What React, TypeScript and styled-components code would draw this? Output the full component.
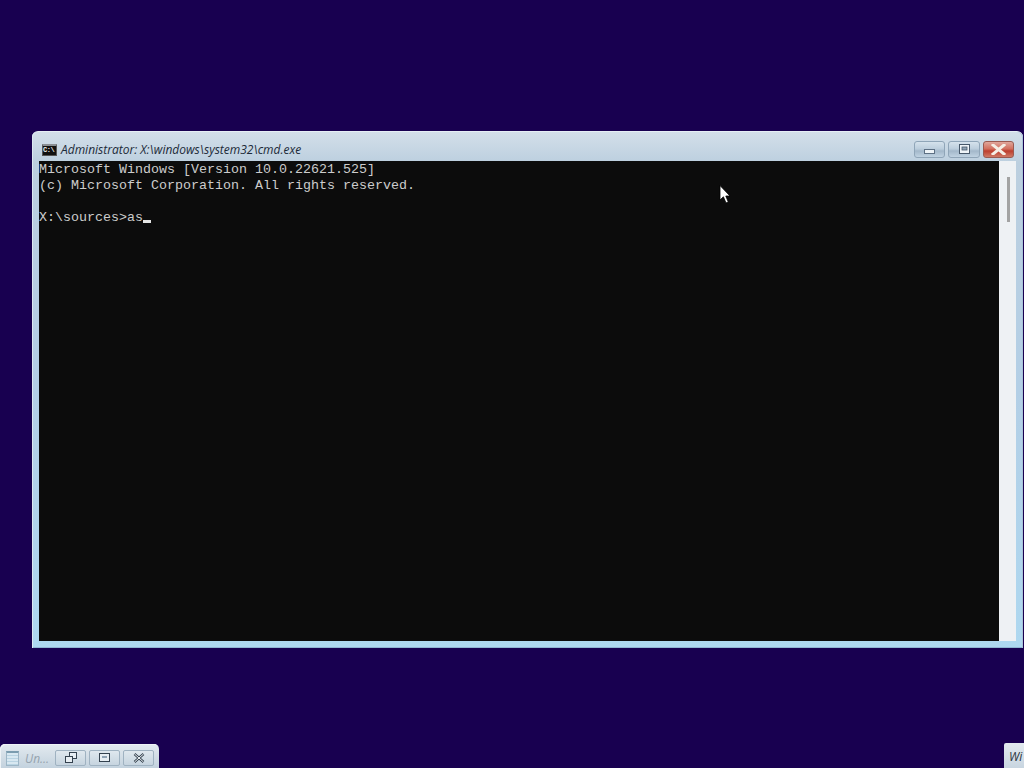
import React from 'react'
import styled, { createGlobalStyle } from 'styled-components'

const GlobalStyle = createGlobalStyle`
  html, body {
    margin: 0;
    padding: 0;
    height: 100%;
    overflow: hidden;
    background: #180050;
  }
`

const Desktop = styled.div`
  position: relative;
  width: 1024px;
  height: 768px;
  overflow: hidden;
  background: #180050;
`

const ConsoleWindow = styled.div`
  position: absolute;
  left: 32px;
  top: 131px;
  width: 991px;
  height: 517px;
  box-sizing: border-box;
  display: flex;
  flex-direction: column;
  padding: 0 7px 7px 7px;
  border-radius: 6px 6px 0 0;
  border-top: 1px solid #e6eef5;
  background: linear-gradient(180deg, #d3dfe9 0%, #bccfdf 6%, #b3cfe6 50%, #aed8f0 100%);
  box-shadow: inset 1px 0 0 #dce9f2, inset -1px 0 0 #a9c4d8, inset 0 -1px 0 #8fb6d2;
`

const TitleBar = styled.div`
  height: 29px;
  flex: none;
  box-sizing: border-box;
  display: flex;
  align-items: center;
  gap: 4px;
  padding: 6px 0 0 3px;
`

const ConsoleIcon = styled.div`
  width: 15px;
  height: 12px;
  flex: none;
  box-sizing: border-box;
  background: #111;
  border: 1px solid #555;
  border-top: 2px solid #8a8f94;
  color: #f2f2f2;
  font: bold 7px/8px "Liberation Mono", monospace;
  letter-spacing: -0.5px;
  overflow: hidden;
  white-space: nowrap;
`

const TitleText = styled.span`
  flex: 1;
  font: italic 12px/16px "Open Sans", sans-serif;
  color: #1c2a38;
  white-space: nowrap;
`

const CaptionGroup = styled.div`
  display: flex;
  gap: 3px;
  margin-top: -1px;
  margin-right: 2px;
`

const CaptionButton = styled.div<{ $close?: boolean; $w: number }>`
  width: ${p => p.$w}px;
  height: 17px;
  box-sizing: border-box;
  display: flex;
  align-items: center;
  justify-content: center;
  border: 1px solid ${p => (p.$close ? '#9a5a50' : '#8fa5b8')};
  border-radius: 3px;
  background: ${p =>
    p.$close
      ? 'linear-gradient(180deg, #e0a79c 0%, #d2705f 45%, #bd3f2e 60%, #cf7a66 100%)'
      : 'linear-gradient(180deg, #d5e2ec 0%, #bccedd 45%, #a3b8ca 60%, #c0d3e2 100%)'};
`

const MinimizeGlyph = styled.svg`
  margin-top: 5px;
`

const Body = styled.div`
  flex: 1;
  display: flex;
  min-height: 0;
`

const Screen = styled.pre`
  flex: 1;
  margin: 0;
  padding-top: 1px;
  background: #0c0c0c;
  color: #cccccc;
  font: 13.33px/16px "Liberation Mono", monospace;
  white-space: pre;
  overflow: hidden;
`

const Cursor = styled.span`
  display: inline-block;
  width: 8px;
  height: 3px;
  background: #e6e6e6;
  vertical-align: -2px;
`

const ScrollTrack = styled.div`
  width: 17px;
  flex: none;
  box-sizing: border-box;
  padding: 16px 0 0 8px;
  background: #eef1f4;
`

const ScrollThumb = styled.div`
  width: 3px;
  height: 45px;
  background: #a3a3a3;
`

const Pointer = styled.svg`
  position: absolute;
  left: 719px;
  top: 185px;
`

const MinimizedBar = styled.div`
  position: absolute;
  left: 0;
  top: 744px;
  width: 159px;
  height: 24px;
  box-sizing: border-box;
  display: flex;
  align-items: center;
  padding: 5px 5px 0 6px;
  border-radius: 5px 5px 0 0;
  background: linear-gradient(180deg, #e3eaef 0%, #c3d2de 100%);
  box-shadow: inset 1px 1px 0 #eef3f6;
`

const NotepadIcon = styled.div`
  width: 13px;
  height: 15px;
  flex: none;
  box-sizing: border-box;
  border: 1px solid #9db6c6;
  border-top: 2px solid #7b9caf;
  background: repeating-linear-gradient(180deg, #d8e8f1 0 2px, #b9d3e2 2px 3px);
`

const MinimizedTitle = styled.span`
  flex: 1;
  margin-left: 6px;
  font: italic 12px/16px "Open Sans", sans-serif;
  color: #95a3ae;
  white-space: nowrap;
`

const MiniButtons = styled.div`
  display: flex;
  gap: 3px;
  margin-top: -2px;
`

const MiniButton = styled.div`
  width: 31px;
  height: 16px;
  box-sizing: border-box;
  display: flex;
  align-items: center;
  justify-content: center;
  border: 1px solid #9fb2c1;
  border-radius: 2px;
  background: linear-gradient(180deg, #dfe8ee 0%, #c6d4df 100%);
`

const CornerTab = styled.div`
  position: absolute;
  left: 1004px;
  top: 743px;
  width: 20px;
  height: 25px;
  box-sizing: border-box;
  padding: 6px 0 0 5px;
  overflow: hidden;
  border-radius: 2px 0 0 0;
  background: linear-gradient(180deg, #e3eaef 0%, #c8d5e0 100%);
  font: italic 12px/16px "Open Sans", sans-serif;
  color: #2a3540;
  white-space: nowrap;
`

const App = () => {
  return (
    <Desktop>
      <GlobalStyle />
      <ConsoleWindow>
        <TitleBar>
          <ConsoleIcon>C:\</ConsoleIcon>
          <TitleText>Administrator: X:\windows\system32\cmd.exe</TitleText>
          <CaptionGroup>
            <CaptionButton $w={31}>
              <MinimizeGlyph width="11" height="5" viewBox="0 0 11 5">
                <rect x="0.5" y="0.5" width="10" height="4" fill="#eef4f8" stroke="#5d7084" />
              </MinimizeGlyph>
            </CaptionButton>
            <CaptionButton $w={32}>
              <svg width="11" height="10" viewBox="0 0 11 10">
                <rect x="0.5" y="0.5" width="10" height="9" fill="#eef4f8" stroke="#46586a" />
                <rect x="3" y="3" width="5" height="3" fill="#8fa3b5" stroke="#46586a" strokeWidth="0.8" />
              </svg>
            </CaptionButton>
            <CaptionButton $close $w={31}>
              <svg width="15" height="11" viewBox="0 0 15 11">
                <path d="M2 1 L13 10 M13 1 L2 10" stroke="#f5efe6" strokeWidth="3" strokeLinecap="square" />
              </svg>
            </CaptionButton>
          </CaptionGroup>
        </TitleBar>
        <Body>
          <Screen>
            {'Microsoft Windows [Version 10.0.22621.525]\n(c) Microsoft Corporation. All rights reserved.\n\nX:\\sources>as'}
            <Cursor />
          </Screen>
          <ScrollTrack>
            <ScrollThumb />
          </ScrollTrack>
        </Body>
      </ConsoleWindow>
      <Pointer width="12" height="20" viewBox="0 0 12 20">
        <path d="M1 0.5 L1 15 L4.4 11.8 L7 18 L9.3 17 L6.8 11 L11 11 Z" fill="#fff" stroke="#000" strokeWidth="0.8" />
      </Pointer>
      <MinimizedBar>
        <NotepadIcon />
        <MinimizedTitle>Un...</MinimizedTitle>
        <MiniButtons>
          <MiniButton>
            <svg width="12" height="11" viewBox="0 0 12 11">
              <rect x="4.5" y="0.5" width="7" height="6" fill="#e7eef3" stroke="#34424f" />
              <rect x="0.5" y="4.5" width="7" height="6" fill="#e7eef3" stroke="#34424f" />
            </svg>
          </MiniButton>
          <MiniButton>
            <svg width="11" height="9" viewBox="0 0 11 9">
              <rect x="0.5" y="0.5" width="10" height="8" fill="#e7eef3" stroke="#34424f" />
              <rect x="3" y="3" width="5" height="2" fill="#8fa3b5" />
            </svg>
          </MiniButton>
          <MiniButton>
            <svg width="12" height="10" viewBox="0 0 12 10">
              <path d="M1.5 1 L10.5 9 M10.5 1 L1.5 9" stroke="#34424f" strokeWidth="2.4" />
              <path d="M1.5 1 L10.5 9 M10.5 1 L1.5 9" stroke="#f0f4f7" strokeWidth="1" />
            </svg>
          </MiniButton>
        </MiniButtons>
      </MinimizedBar>
      <CornerTab>Wi</CornerTab>
    </Desktop>
  )
}

export default App
